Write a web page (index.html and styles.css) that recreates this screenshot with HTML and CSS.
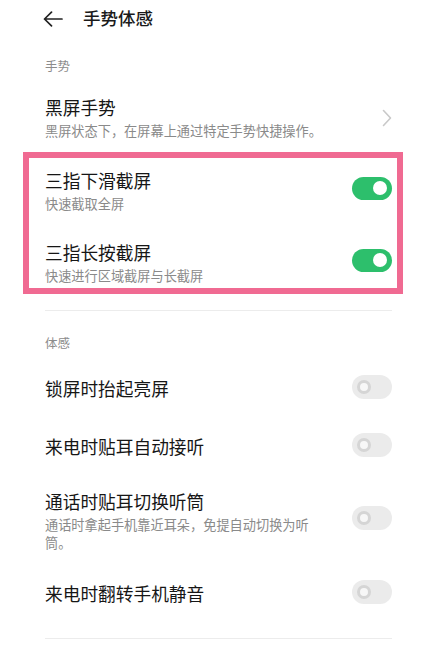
FILE: index.html
```html
<!DOCTYPE html>
<html lang="zh-CN">
<head>
<meta charset="utf-8">
<title>手势体感</title>
<link rel="stylesheet" href="styles.css">
</head>
<body>
<div class="page">
  <header class="topbar">
    <svg class="back" width="20" height="16" viewBox="0 0 20 16" aria-hidden="true">
      <path d="M1.5 8H19M8.5 1.2L1.5 8l7 6.8" fill="none" stroke="#222" stroke-width="1.7" stroke-linecap="round" stroke-linejoin="round"/>
    </svg>
    <h1 class="title">手势体感</h1>
  </header>

  <div class="section-label first">手势</div>

  <div class="row two nav">
    <div class="text">
      <div class="name">黑屏手势</div>
      <div class="desc">黑屏状态下，在屏幕上通过特定手势快捷操作。</div>
    </div>
    <svg class="chevron" width="10" height="18" viewBox="0 0 10 18" aria-hidden="true">
      <path d="M1.5 1.5L8.5 9l-7 7.5" fill="none" stroke="#c9c9c9" stroke-width="1.6" stroke-linecap="round" stroke-linejoin="round"/>
    </svg>
  </div>

  <div class="highlight">
    <div class="row in-box first-in-box">
      <div class="text">
        <div class="name">三指下滑截屏</div>
        <div class="desc">快速截取全屏</div>
      </div>
      <span class="switch on"><span class="knob"></span></span>
    </div>
    <div class="row in-box last-in-box">
      <div class="text">
        <div class="name">三指长按截屏</div>
        <div class="desc">快速进行区域截屏与长截屏</div>
      </div>
      <span class="switch on"><span class="knob"></span></span>
    </div>
  </div>

  <div class="divider top-divider"></div>

  <div class="section-label">体感</div>

  <div class="row one">
    <div class="text"><div class="name">锁屏时抬起亮屏</div></div>
    <span class="switch off"><span class="knob"></span></span>
  </div>
  <div class="row one">
    <div class="text"><div class="name">来电时贴耳自动接听</div></div>
    <span class="switch off"><span class="knob"></span></span>
  </div>
  <div class="row two">
    <div class="text narrow">
      <div class="name">通话时贴耳切换听筒</div>
      <div class="desc">通话时拿起手机靠近耳朵，免提自动切换为听筒。</div>
    </div>
    <span class="switch off"><span class="knob"></span></span>
  </div>
  <div class="row one">
    <div class="text"><div class="name">来电时翻转手机静音</div></div>
    <span class="switch off"><span class="knob"></span></span>
  </div>

  <div class="divider bottom-divider"></div>
</div>
</body>
</html>
```

FILE: styles.css
```css
* {
  box-sizing: border-box;
}

html, body {
  margin: 0;
  padding: 0;
  background: #ffffff;
}

body {
  font-family: "Noto Sans CJK SC", "Noto Sans", sans-serif;
  color: #1c1c1c;
  width: 434px;
  height: 665px;
  overflow: hidden;
}

.page {
  display: flex;
  flex-direction: column;
}

/* top bar */
.topbar {
  height: 36px;
  display: flex;
  align-items: center;
  padding-left: 43px;
}

.back {
  display: block;
  margin-top: 1px;
}

.title {
  margin: 0 0 0 20px;
  font-size: 17.5px;
  font-weight: 500;
  line-height: 36px;
  color: #1a1a1a;
}

/* section captions */
.section-label {
  padding-left: 45px;
  font-size: 12.5px;
  line-height: 18px;
  color: #8c8c8c;
  margin-top: 23px;
  margin-bottom: 7px;
}

.section-label.first {
  margin-top: 21px;
  margin-bottom: 6px;
}

/* list rows */
.row {
  display: flex;
  align-items: center;
  justify-content: space-between;
  padding: 15px 42px 15px 45px;
}

.row.two {
  padding-top: 12px;
  padding-bottom: 12px;
}

.text {
  display: flex;
  flex-direction: column;
}

.text.narrow {
  max-width: 268px;
}

.name {
  font-size: 17.7px;
  line-height: 28px;
  color: #161616;
}

.desc {
  margin-top: 1px;
  font-size: 13.2px;
  line-height: 18px;
  color: #8a8a8a;
}

.chevron {
  display: block;
  margin-top: 3px;
}

/* highlighted group */
.highlight {
  margin-left: 23px;
  width: 380px;
  border: 6px solid #f06a92;
}

.row.in-box {
  padding-left: 16px;
  padding-right: 5px;
}

.row.first-in-box {
  padding-top: 8px;
  padding-bottom: 12px;
}

.row.last-in-box {
  padding-top: 13px;
  padding-bottom: 3px;
}

/* switches */
.switch {
  position: relative;
  display: block;
  flex: none;
  width: 40px;
  height: 23px;
  border-radius: 12px;
  margin-bottom: 3px;
}

.switch.on {
  background: #2dbf6c;
}

.switch.off {
  height: 24px;
  background: #ebebeb;
}

.switch .knob {
  position: absolute;
  top: 50%;
  width: 14px;
  height: 14px;
  margin-top: -7px;
  border-radius: 50%;
}

.switch.on .knob {
  right: 5px;
  background: #ffffff;
}

.switch.off .knob {
  left: 5px;
  background: #f7f7f7;
  border: 3px solid #d5d5d5;
}

/* separators */
.divider {
  height: 1px;
  background: #ececec;
  margin-left: 45px;
  margin-right: 42px;
}

.top-divider {
  margin-top: 16px;
}

.bottom-divider {
  margin-top: 16px;
}
```
